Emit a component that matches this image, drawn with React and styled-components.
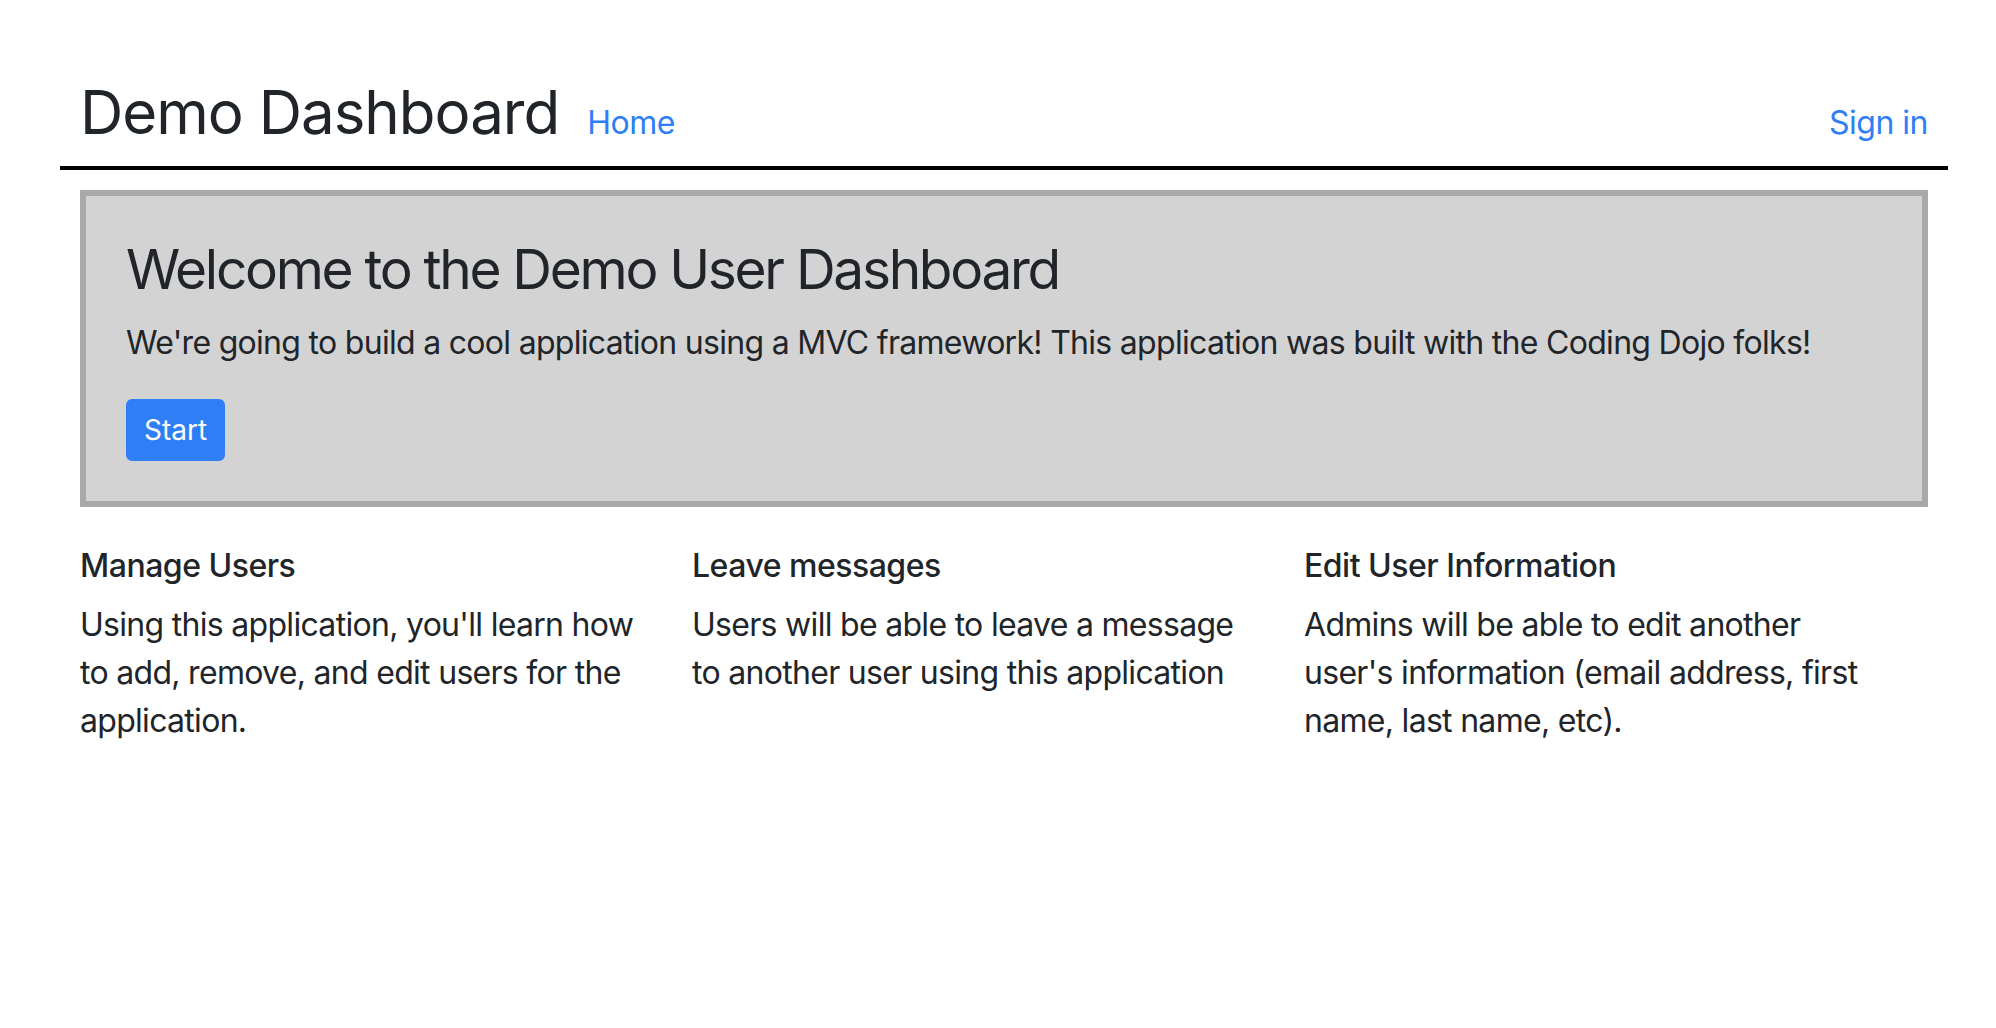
import React from 'react';
import styled, { createGlobalStyle } from 'styled-components';

const GlobalStyle = createGlobalStyle`
  body {
    margin: 0;
    background: #ffffff;
    color: #212529;
    font-family: 'Inter', 'Noto Sans', 'Liberation Sans', sans-serif;
  }
`

const Page = styled.div`
  padding: 76px 48px 0 60px;
`

const TopBar = styled.header`
  display: flex;
  align-items: baseline;
  padding: 0 20px 18px;
  border-bottom: 4px solid #000;
`

const Brand = styled.h1`
  margin: 0 28px 0 0;
  font-size: 60px;
  font-weight: 400;
  line-height: 1.2;
  letter-spacing: -1px;
`

const NavLink = styled.a`
  font-size: 32px;
  line-height: 1.5;
  letter-spacing: -0.5px;
  color: #2f7ef6;
  text-decoration: none;
  margin-left: ${props => (props.right ? 'auto' : '0')};
  cursor: pointer;
`

const Welcome = styled.section`
  margin: 20px 20px 0;
  padding: 40px;
  background: #d3d3d3;
  border: 6px solid #a9a9a9;
`

const WelcomeTitle = styled.h2`
  margin: 0 0 16px;
  font-size: 55px;
  font-weight: 400;
  line-height: 1.22;
  letter-spacing: -2.3px;
`

const Lead = styled.p`
  margin: 0 0 32px;
  font-size: 32px;
  line-height: 1.5;
  letter-spacing: -0.7px;
`

const StartButton = styled.button`
  display: block;
  padding: 8px 16px;
  font-family: inherit;
  font-size: 28px;
  line-height: 1.5;
  color: #fff;
  background: #2f7ef6;
  border: 2px solid #2f7ef6;
  border-radius: 6px;
  cursor: pointer;
`

const Features = styled.div`
  display: grid;
  grid-template-columns: repeat(3, 612px);
  margin: 40px 20px 0;
`

const Feature = styled.div`
  padding-right: 40px;
`

const FeatureTitle = styled.h5`
  margin: 0 0 16px;
  font-size: 32px;
  font-weight: 500;
  line-height: 1.2;
  letter-spacing: -0.5px;
`

const FeatureText = styled.p`
  margin: 0;
  font-size: 32px;
  line-height: 1.5;
  letter-spacing: -0.7px;
`

const features = [
  {
    title: 'Manage Users',
    text: "Using this application, you'll learn how to add, remove, and edit users for the application.",
  },
  {
    title: 'Leave messages',
    text: 'Users will be able to leave a message to another user using this application',
  },
  {
    title: 'Edit User Information',
    text: "Admins will be able to edit another user's information (email address, first name, last name, etc).",
  },
]

export default function App() {
  return (
    <Page>
      <GlobalStyle />
      <TopBar>
        <Brand>Demo Dashboard</Brand>
        <NavLink>Home</NavLink>
        <NavLink right>Sign in</NavLink>
      </TopBar>

      <Welcome>
        <WelcomeTitle>Welcome to the Demo User Dashboard</WelcomeTitle>
        <Lead>
          We're going to build a cool application using a MVC framework! This application was built with the Coding Dojo folks!
        </Lead>
        <StartButton>Start</StartButton>
      </Welcome>

      <Features>
        {features.map(f => (
          <Feature key={f.title}>
            <FeatureTitle>{f.title}</FeatureTitle>
            <FeatureText>{f.text}</FeatureText>
          </Feature>
        ))}
      </Features>
    </Page>
  )
}
